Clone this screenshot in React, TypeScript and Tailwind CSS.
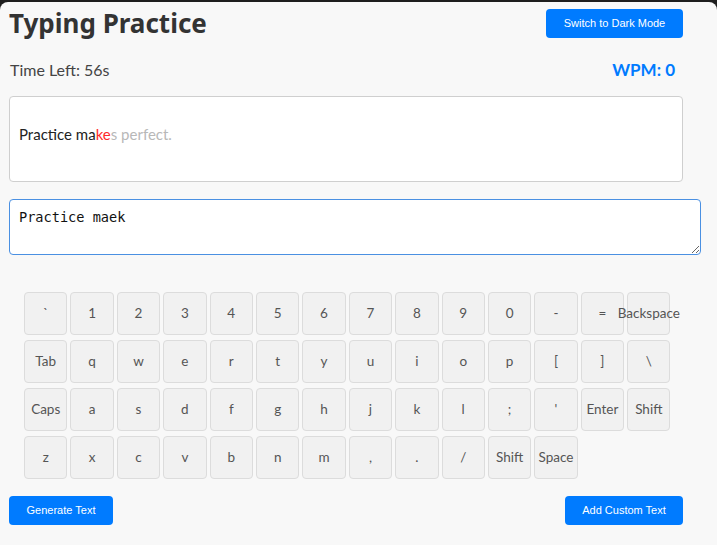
import React from "react";

const rows: string[][] = [
  ["`", "1", "2", "3", "4", "5", "6", "7", "8", "9", "0", "-", "=", "Backspace"],
  ["Tab", "q", "w", "e", "r", "t", "y", "u", "i", "o", "p", "[", "]", "\\"],
  ["Caps", "a", "s", "d", "f", "g", "h", "j", "k", "l", ";", "'", "Enter", "Shift"],
  ["z", "x", "c", "v", "b", "n", "m", ",", ".", "/", "Shift", "Space"],
];

function Key({ label }: { label: string }) {
  return (
    <div className="flex h-[43px] w-[43.4px] shrink-0 items-center justify-center whitespace-nowrap rounded-[4px] border border-[#dcdcdc] bg-[#f1f1f1] text-[13.5px] text-[#555]">
      {label}
    </div>
  );
}

export default function App() {
  return (
    <div className="min-h-screen bg-[#1e1e1e] pt-[2px] font-['Lato',sans-serif]">
      <div className="h-[543px] rounded-t-[8px] bg-[#f8f8f8] pl-[9px] pt-[3px] text-[#333]">
        <div className="w-[674px]">
          {/* header */}
          <div className="flex items-center justify-between">
            <h1 className="font-['Noto_Sans',sans-serif] text-[26px] font-bold leading-[36px]">Typing Practice</h1>
            <button className="h-[29px] w-[137px] rounded-[4px] bg-[#007bff] font-['Liberation_Sans',sans-serif] text-[11px] text-white">
              Switch to Dark Mode
            </button>
          </div>

          {/* stats */}
          <div className="mt-[16px] flex items-center justify-between pr-[8px]">
            <span className="pl-[1px] text-[16px] text-[#444]">Time Left: 56s</span>
            <span className="text-[17px] font-bold text-[#007bff]">WPM: 0</span>
          </div>

          {/* target text */}
          <div className="mt-[13px] h-[86px] rounded-[4px] border border-[#cfcfcf] bg-white px-[9px] pt-[26px] text-[15px]">
            <span className="text-[#222]">Practice ma</span>
            <span className="text-[#ff2a2a]">ke</span>
            <span className="text-[#b8b8b8]">s perfect.</span>
          </div>

          {/* input */}
          <textarea
            readOnly
            value="Practice maek"
            className="mt-[17px] block h-[56px] w-[calc(100%+18px)] resize-y rounded-[4px] border border-[#4a90e2] bg-white px-[9px] py-[7px] font-['DejaVu_Sans_Mono',monospace] text-[13.6px] text-[#111] outline-none"
          />

          {/* keyboard */}
          <div className="mt-[37px] flex flex-col gap-y-[5px] pl-[15px]">
            {rows.map((row, i) => (
              <div key={i} className="flex gap-x-[3px]">
                {row.map((k, j) => (
                  <Key key={j} label={k} />
                ))}
              </div>
            ))}
          </div>

          {/* actions */}
          <div className="mt-[17px] flex items-center justify-between">
            <button className="h-[29px] w-[104px] rounded-[4px] bg-[#007bff] font-['Liberation_Sans',sans-serif] text-[11px] text-white">
              Generate Text
            </button>
            <button className="h-[29px] w-[118px] rounded-[4px] bg-[#007bff] font-['Liberation_Sans',sans-serif] text-[11px] text-white">
              Add Custom Text
            </button>
          </div>
        </div>
      </div>
    </div>
  );
}
